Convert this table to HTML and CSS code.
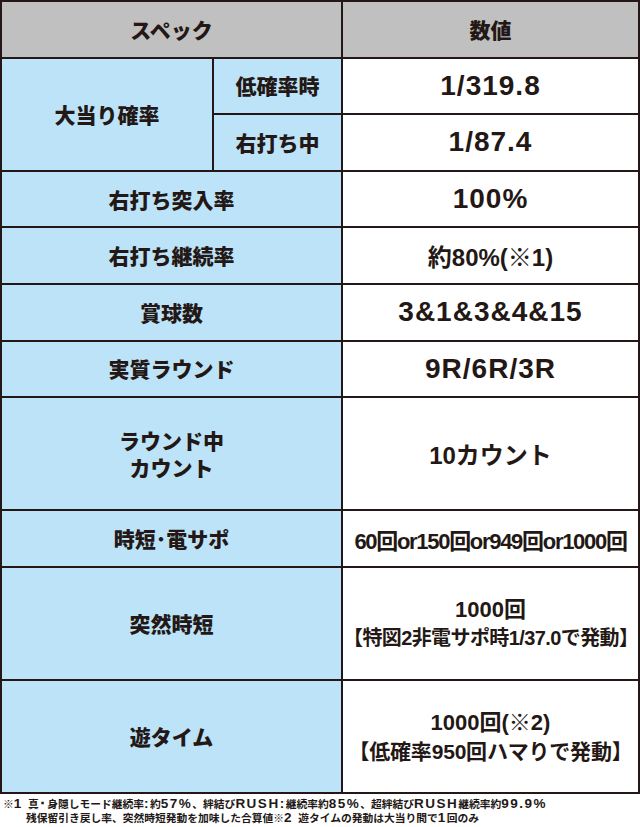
FILE: index.html
```html
<!DOCTYPE html>
<html lang="ja">
<head>
<meta charset="utf-8">
<title>スペック</title>
<link rel="stylesheet" href="styles.css">
</head>
<body>
<div class="spec">
  <div class="cell head c2">スペック</div>
  <div class="cell head">数値</div>

  <div class="cell label r2">大当り確率</div>
  <div class="cell label">低確率時</div>
  <div class="cell value big">1/319.8</div>
  <div class="cell label">右打ち中</div>
  <div class="cell value big">1/87.4</div>

  <div class="cell label c2">右打ち突入率</div>
  <div class="cell value big">100%</div>

  <div class="cell label c2">右打ち継続率</div>
  <div class="cell value mid">約80%(※1)</div>

  <div class="cell label c2">賞球数</div>
  <div class="cell value big">3&amp;1&amp;3&amp;4&amp;15</div>

  <div class="cell label c2">実質ラウンド</div>
  <div class="cell value big">9R/6R/3R</div>

  <div class="cell label c2 r2">ラウンド中<br>カウント</div>
  <div class="cell value mid r2">10カウント</div>

  <div class="cell label c2">時短･電サポ</div>
  <div class="cell value narrow">60回or150回or949回or1000回</div>

  <div class="cell label c2 r2">突然時短</div>
  <div class="cell value r2 two">
    <span class="l1">1000回</span>
    <span class="l2 tight">【特図2非電サポ時1/37.0で発動】</span>
  </div>

  <div class="cell label c2 r2">遊タイム</div>
  <div class="cell value r2 two">
    <span class="l1">1000回(※2)</span>
    <span class="l2">【低確率950回ハマりで発動】</span>
  </div>
</div>
<div class="notes">
  <p class="note">※<span class="lat">1 </span>真<span class="lat">･</span>身隠しモード継続率<span class="lat">:</span>約<span class="lat">57%</span>、絆結び<span class="lat">RUSH:</span>継続率約<span class="lat">85%</span>、超絆結び<span class="lat">RUSH</span>継続率約<span class="lat">99.9%</span></p>
  <p class="note indent">残保留引き戻し率、突然時短発動を加味した合算値※<span class="lat">2 </span>遊タイムの発動は大当り間で<span class="lat">1</span>回のみ</p>
</div>
</body>
</html>
```
FILE: styles.css
```css
html, body {
  margin: 0;
  padding: 0;
  background: #ffffff;
}

body {
  width: 640px;
  color: #231815;
  font-family: "Noto Sans CJK JP", "Noto Sans", sans-serif;
}

.spec {
  display: grid;
  grid-template-columns: 210px 127px 295px;
  grid-template-rows: repeat(14, 54.6px);
  gap: 2px;
  padding: 2px;
  width: 640px;
  box-sizing: border-box;
  background: #231815;
}

.cell {
  display: flex;
  align-items: center;
  justify-content: center;
  text-align: center;
  font-weight: 900;
}

.c2 { grid-column: span 2; }
.r2 { grid-row: span 2; }

.head {
  background: #c0c0c0;
  font-size: 21px;
}

.label {
  background: #bce3f8;
  font-size: 21px;
  line-height: 27px;
}

.value {
  background: #ffffff;
  font-family: "Liberation Sans", "Noto Sans CJK JP", sans-serif;
  font-weight: 700;
  font-size: 22px;
}

.value.big { font-size: 28px; letter-spacing: 1px; }
.value.mid { font-size: 24px; }
.value.narrow { font-size: 22px; letter-spacing: -1.3px; }

.two {
  flex-direction: column;
  line-height: 29px;
}

.two .l1 { font-size: 22px; }
.two .l2 { font-size: 21px; letter-spacing: -0.2px; }
.two .l2.tight { font-size: 20px; letter-spacing: -0.6px; }

.notes {
  padding: 3px 0 0 3px;
  font-size: 10.75px;
  font-weight: 700;
  line-height: 14px;
}

.note {
  margin: 0;
  white-space: nowrap;
}

.lat {
  font-family: "Liberation Sans", sans-serif;
  font-size: 13.5px;
  letter-spacing: 1.5px;
}

.indent {
  padding-left: 23px;
}
```
